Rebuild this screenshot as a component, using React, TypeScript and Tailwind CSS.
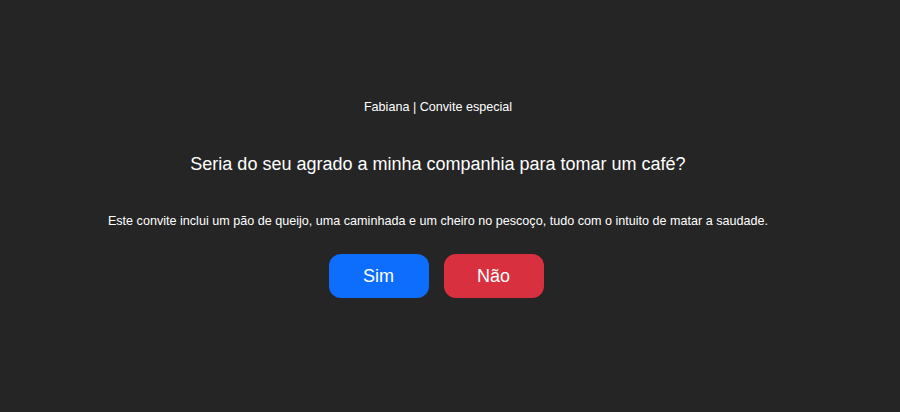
export default function App() {
  return (
    <div
      className="flex h-[412px] w-full flex-col items-center bg-[#252525] pr-[24px] pt-[99px] text-white"
      style={{ fontFamily: '"Liberation Sans", Arial, sans-serif' }}
    >
      <p className="text-[12.6px] leading-[16px]">Fabiana | Convite especial</p>
      <h1 className="mt-[38px] text-[18px] leading-[22px]">
        Seria do seu agrado a minha companhia para tomar um café?
      </h1>
      <p className="mt-[38px] text-[12.6px] leading-[16px]">
        Este convite inclui um pão de queijo, uma caminhada e um cheiro no pescoço, tudo com o intuito de matar a saudade.
      </p>
      <div className="mr-[4px] mt-[25px] flex gap-[15px]">
        <button className="h-[44px] w-[100px] rounded-[12px] bg-[#0d6efd] text-[18px]">Sim</button>
        <button className="h-[44px] w-[100px] rounded-[12px] bg-[#d9303f] text-[18px]">Não</button>
      </div>
    </div>
  );
}
